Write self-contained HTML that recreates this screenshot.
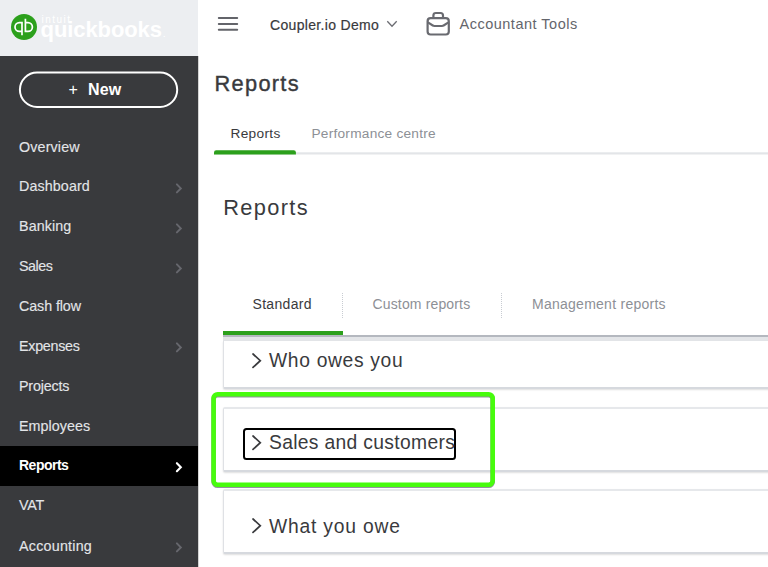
<!DOCTYPE html>
<html lang="en">
<head>
<meta charset="utf-8">
<title>Reports</title>
<style>
*{box-sizing:border-box;margin:0;padding:0}
html,body{width:768px;height:567px;overflow:hidden;background:#fff;font-family:"Liberation Sans",sans-serif;color:#393a3d}
#side{position:absolute;left:0;top:0;width:198px;height:567px;background:#393a3d}
#logo{position:absolute;left:0;top:0;width:198px;height:56px;background:#eceef1}
#newbtn{position:absolute;left:19px;top:71.500px;width:160px;height:35.500px;border:2px solid #fff;border-radius:18px}
.nav{position:absolute;left:0;width:198px;height:40px}
.nav span{position:absolute;left:19px;top:11.500px;color:#e3e5e8;font-size:14.300px;line-height:16px;letter-spacing:.1px;white-space:nowrap;-webkit-text-stroke:.12px #e3e5e8}
.nav.act{background:#000}
.nav.act span{color:#fff;font-weight:bold;-webkit-text-stroke:0;font-size:14px;letter-spacing:-.5px}
.nav svg{position:absolute;left:172px;top:15px}
.abs{position:absolute;white-space:nowrap}
.t{position:absolute;white-space:nowrap;line-height:1}
.card{position:absolute;left:223px;width:560px;border:1px solid #dfe1e5;border-top:2px solid #e6e8eb;border-bottom:2px solid #d6d9de;border-radius:2px;background:#fff;box-shadow:0 1px 2px rgba(0,0,0,.13)}
</style>
</head>
<body>
<div class="abs" style="left:198px;top:56px;width:1px;height:511px;background:rgba(57,58,61,.22)"></div>
<div id="side">
  <div id="logo">
    <svg class="abs" style="left:11px;top:14px" width="26" height="26" viewBox="0 0 26 26"><circle cx="13" cy="13" r="13" fill="#2ca01c"/><g fill="none" stroke="#fff" stroke-width="1.7"><path d="M11 8.600H8.400a4.400 4.400 0 0 0 0 8.800H11M11 7.800v13.400" /><path d="M14.400 17.400H17a4.400 4.400 0 0 0 0-8.800h-2.600M14.400 18.200V4.800"/></g></svg>
    <div class="t" id="t_intuit" style="left:41.500px;top:14.500px;font-size:10px;color:#fff;letter-spacing:1.500px">intuit</div>
    <div class="t" id="t_qb" style="left:40.600px;top:18.900px;font-size:22px;color:#fff;font-weight:bold;letter-spacing:-.1px">quickbooks<span style="font-size:7px;letter-spacing:0;margin-left:1.500px">.</span></div>
  </div>
  <svg class="abs" style="left:10px;top:62px" width="180" height="56" viewBox="0 0 180 56"><rect x="9.900" y="10.600" width="157.300" height="34.300" rx="17.150" fill="none" stroke="#fff" stroke-width="2"/></svg>
  <div class="t" id="t_plus" style="left:68.500px;top:82px;font-size:16px;color:#fff">+</div>
  <div class="t" id="t_new" style="left:88px;top:81.500px;font-size:16px;color:#fff;font-weight:bold;letter-spacing:.2px">New</div>
  <div class="nav" style="top:127px"><span id="n1" style="letter-spacing:0.140px">Overview</span></div>
  <div class="nav" style="top:166.900px"><span id="n2" style="letter-spacing:0.100px">Dashboard</span><svg width="14" height="14" viewBox="0 0 14 14"><path d="M4.900 2.400l3.900 4 -3.900 4" fill="none" stroke="#66676d" stroke-width="2" stroke-linecap="round"/></svg></div>
  <div class="nav" style="top:206.800px"><span id="n3" style="letter-spacing:0.100px">Banking</span><svg width="14" height="14" viewBox="0 0 14 14"><path d="M4.900 2.400l3.900 4 -3.900 4" fill="none" stroke="#66676d" stroke-width="2" stroke-linecap="round"/></svg></div>
  <div class="nav" style="top:246.600px"><span id="n4" style="letter-spacing:-0.440px">Sales</span><svg width="14" height="14" viewBox="0 0 14 14"><path d="M4.900 2.400l3.900 4 -3.900 4" fill="none" stroke="#66676d" stroke-width="2" stroke-linecap="round"/></svg></div>
  <div class="nav" style="top:286.500px"><span id="n5" style="letter-spacing:-0.090px">Cash flow</span></div>
  <div class="nav" style="top:326.400px"><span id="n6" style="letter-spacing:-0.270px">Expenses</span><svg width="14" height="14" viewBox="0 0 14 14"><path d="M4.900 2.400l3.900 4 -3.900 4" fill="none" stroke="#66676d" stroke-width="2" stroke-linecap="round"/></svg></div>
  <div class="nav" style="top:366.300px"><span id="n7" style="letter-spacing:-0.190px">Projects</span></div>
  <div class="nav" style="top:406.100px"><span id="n8" style="letter-spacing:0.050px">Employees</span></div>
  <div class="nav act" style="top:446px;height:40px"><span id="n9" style="top:10.600px">Reports</span><svg width="14" height="14" viewBox="0 0 14 14"><path d="M4.900 2.200l3.900 4 -3.900 4" fill="none" stroke="#fff" stroke-width="2.100" stroke-linecap="round"/></svg></div>
  <div class="nav" style="top:485.900px"><span id="n10" style="letter-spacing:-0.200px">VAT</span></div>
  <div class="nav" style="top:525.800px"><span id="n11" style="letter-spacing:0.230px;top:11.900px">Accounting</span><svg width="14" height="14" viewBox="0 0 14 14"><path d="M4.900 2.400l3.900 4 -3.900 4" fill="none" stroke="#66676d" stroke-width="2" stroke-linecap="round"/></svg></div>
</div>

<!-- top bar -->
<svg class="abs" style="left:217px;top:16px" width="22" height="16" viewBox="0 0 22 16"><path d="M1.800 2h18.400M1.800 7.900h18.400M1.800 13.750h18.400" stroke="#63646a" stroke-width="2" stroke-linecap="round" fill="none"/></svg>
<div class="t" id="t_coupler" style="left:270px;top:18.300px;font-size:14px;color:#393a3d;letter-spacing:.33px;-webkit-text-stroke:.2px #393a3d">Coupler.io Demo</div>
<svg class="abs" style="left:386px;top:20px" width="12" height="8" viewBox="0 0 12 8"><path d="M1.300 1.300l4.700 5 4.700-5" fill="none" stroke="#6b6c72" stroke-width="1.300"/></svg>
<svg class="abs" style="left:425px;top:11px" width="27" height="26" viewBox="0 0 27 26"><g fill="none" stroke="#696a70" stroke-width="2.200" stroke-linejoin="round"><rect x="2.600" y="7.200" width="21.200" height="16.300" rx="3"/><path d="M8.400 7.200V4.500Q8.400 2 10.900 2H15.500Q18 2 18 4.500V7.200"/><path d="M2.600 11.200C5 12.200 6.800 15 9.400 15H17C19.600 15 21.400 12.200 23.800 11.200"/></g></svg>
<div class="t" id="t_acct" style="left:459.500px;top:17.300px;font-size:14.500px;color:#64656b;letter-spacing:.5px">Accountant Tools</div>

<div class="t" id="t_h1" style="left:214.500px;top:73.300px;font-size:21.800px;color:#393a3d;letter-spacing:1.300px;-webkit-text-stroke:.4px #393a3d">Reports</div>
<div class="t" id="t_tab1" style="left:230.500px;top:127px;font-size:13.700px;color:#393a3d;letter-spacing:.3px">Reports</div>
<div class="t" id="t_tab2" style="left:311.500px;top:127px;font-size:13.700px;color:#8d9096;letter-spacing:.23px">Performance centre</div>
<svg class="abs" style="left:214px;top:148px" width="554" height="8" viewBox="0 0 554 8"><rect x="0" y="4.300" width="554" height="2.200" fill="#e3e5e8"/><path d="M0 6.600V4.400Q0 2.200 2.200 2.200H79.700Q81.900 2.200 81.900 4.400V6.600Z" fill="#2ca01c"/></svg>

<div class="t" id="t_h2" style="left:223.200px;top:196.800px;font-size:21.800px;color:#393a3d;letter-spacing:1.350px">Reports</div>

<div class="t" id="t_s1" style="left:252.500px;top:297px;font-size:14px;color:#393a3d;letter-spacing:.32px">Standard</div>
<div class="t" id="t_s2" style="left:372.500px;top:297px;font-size:14px;color:#8d9096;letter-spacing:.15px">Custom reports</div>
<div class="t" id="t_s3" style="left:532px;top:297px;font-size:14px;color:#8d9096;letter-spacing:.26px">Management reports</div>
<div class="abs" style="left:342px;top:293px;width:0;height:25px;border-left:1px dotted #c8ccd2"></div>
<div class="abs" style="left:501px;top:293px;width:0;height:25px;border-left:1px dotted #c8ccd2"></div>
<div class="abs" style="left:223px;top:336.500px;width:560px;height:4.500px;background:#e3e5e8"></div>
<div class="abs" style="left:223px;top:335px;width:560px;height:1.500px;background:#b4b8bf"></div>
<div class="abs" style="left:223px;top:331px;width:119.500px;height:4px;background:#2ca01c"></div>

<div class="card" style="top:341px;height:47.500px;border-top:none;border-radius:0 0 2px 2px"></div>
<svg class="abs" style="left:250px;top:351.700px" width="14" height="18" viewBox="0 0 14 18"><path d="M3 2l7.300 6.700-7.300 6.700" fill="none" stroke="#393a3d" stroke-width="1.700" stroke-linecap="round"/></svg>
<div class="t" id="t_c1" style="left:269px;top:351.200px;font-size:19.300px;color:#393a3d;letter-spacing:.66px">Who owes you</div>

<div class="card" style="top:407px;height:65px"></div>
<div class="abs" style="left:243px;top:428.300px;width:212.700px;height:32px;border:2px solid #000;border-radius:3.500px"></div>
<svg class="abs" style="left:250px;top:434px" width="14" height="18" viewBox="0 0 14 18"><path d="M3 2l7.300 6.700-7.300 6.700" fill="none" stroke="#393a3d" stroke-width="1.700" stroke-linecap="round"/></svg>
<div class="t" id="t_c2" style="left:269px;top:433.200px;font-size:19.300px;color:#393a3d;letter-spacing:.32px">Sales and customers</div>

<div class="card" style="top:489px;height:65px"></div>
<svg class="abs" style="left:250px;top:516.500px" width="14" height="18" viewBox="0 0 14 18"><path d="M3 2l7.300 6.700-7.300 6.700" fill="none" stroke="#393a3d" stroke-width="1.700" stroke-linecap="round"/></svg>
<div class="t" id="t_c3" style="left:269px;top:516.600px;font-size:19.300px;color:#393a3d;letter-spacing:.8px">What you owe</div>

<svg class="abs" style="left:205px;top:385px;filter:drop-shadow(0 1px .6px rgba(40,40,60,.5))" width="300" height="110" viewBox="0 0 300 110"><rect x="8.600" y="9.200" width="279.100" height="90.600" rx="4" fill="none" stroke="#47fc0d" stroke-width="4.600"/></svg>
</body>
</html>
